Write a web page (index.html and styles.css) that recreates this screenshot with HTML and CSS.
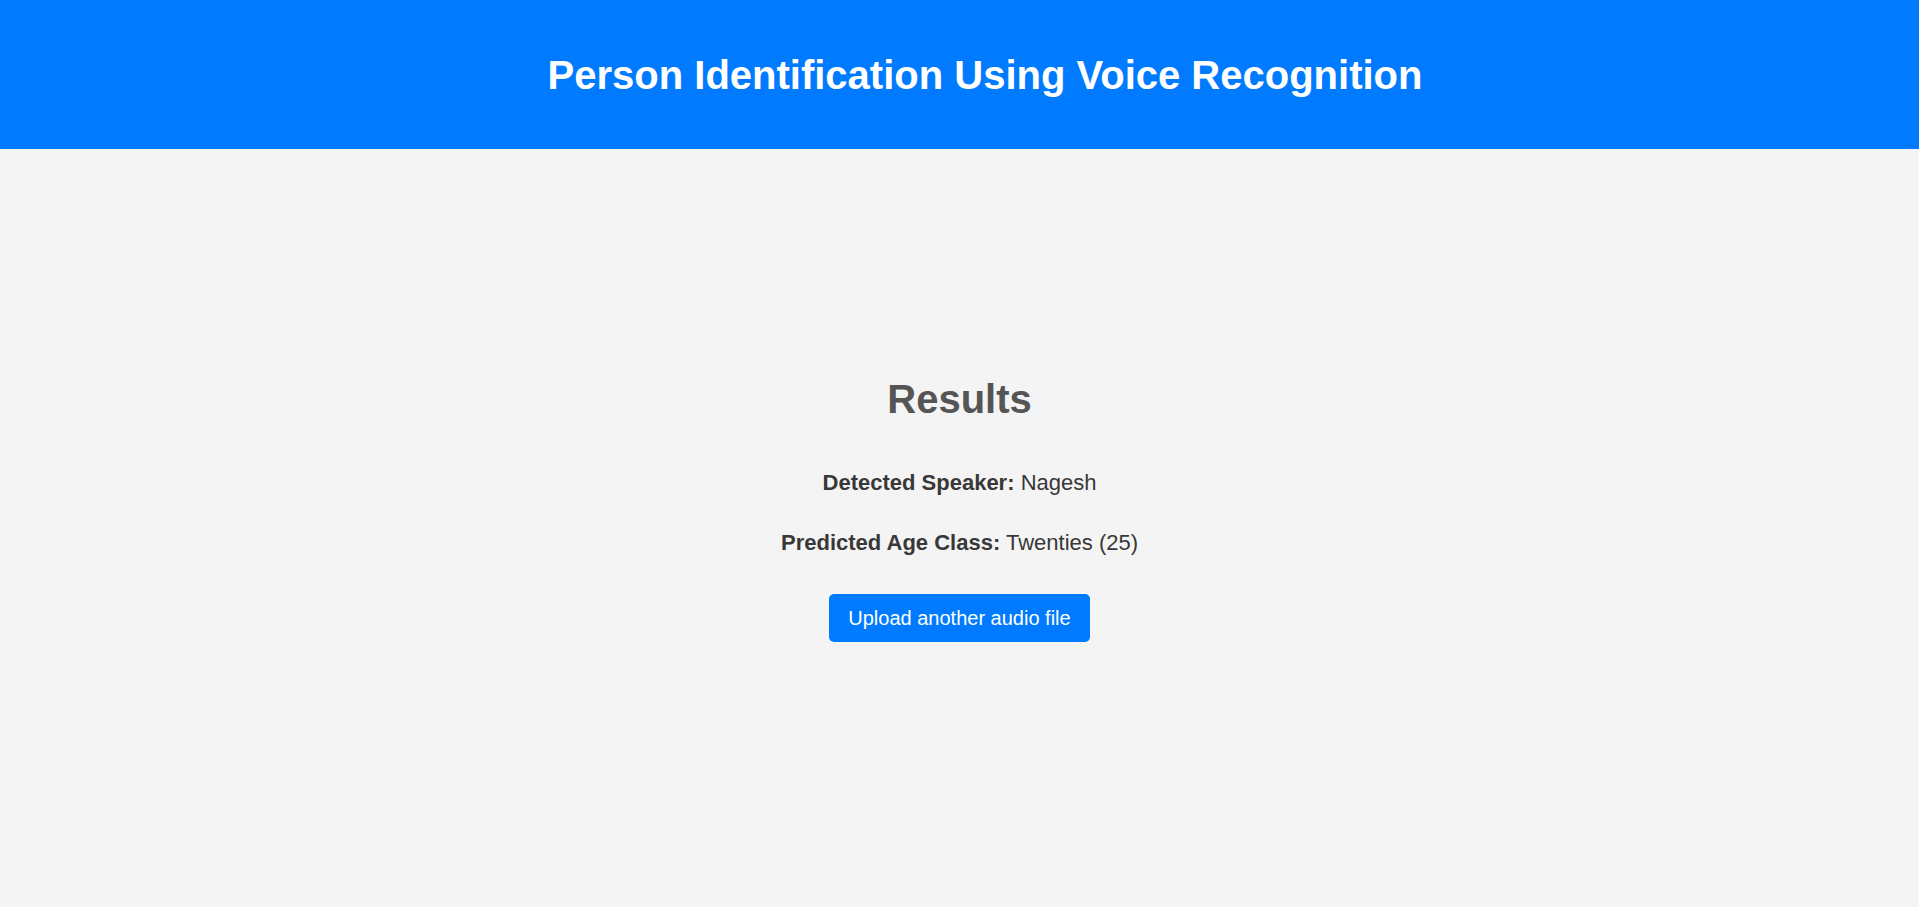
FILE: index.html
```html
<!DOCTYPE html>
<html lang="en">
<head>
<meta charset="utf-8">
<title>Person Identification Using Voice Recognition</title>
<link rel="stylesheet" href="styles.css">
</head>
<body>
<header class="site-header">
  <h1 class="site-title">Person Identification Using Voice Recognition</h1>
</header>
<main class="results">
  <h2 class="results-title">Results</h2>
  <p class="result-line result-speaker"><strong>Detected Speaker:</strong> Nagesh</p>
  <p class="result-line result-age"><strong>Predicted Age Class:</strong> Twenties (25)</p>
  <a class="upload-btn" href="#">Upload another audio file</a>
</main>
</body>
</html>
```

FILE: styles.css
```css
html, body {
  margin: 0;
  padding: 0;
}

body {
  background: #f4f4f4;
  font-family: "Liberation Sans", Arial, sans-serif;
  color: #333;
  min-height: 907px;
}

.site-header {
  background: #007bff;
  height: 149px;
  display: flex;
  align-items: center;
  justify-content: center;
  padding-left: 51px;
}

.site-title {
  margin: 0;
  color: #fff;
  font-size: 40px;
  font-weight: bold;
  line-height: 46px;
}

.results {
  display: flex;
  flex-direction: column;
  align-items: center;
  padding-top: 227px;
}

.results-title {
  margin: 0;
  font-size: 40px;
  line-height: 46px;
  font-weight: bold;
  color: #555;
}

.result-line {
  margin: 0;
  font-size: 22px;
  line-height: 25px;
  color: #383838;
}

.result-line strong {
  font-weight: bold;
}

.result-speaker {
  margin-top: 48px;
}

.result-age {
  margin-top: 35px;
}

.upload-btn {
  margin-top: 39px;
  display: inline-block;
  background: #007bff;
  color: #fff;
  text-decoration: none;
  font-size: 20px;
  line-height: 23px;
  padding: 12.5px 19px 12px;
  border-radius: 5px;
}
```
